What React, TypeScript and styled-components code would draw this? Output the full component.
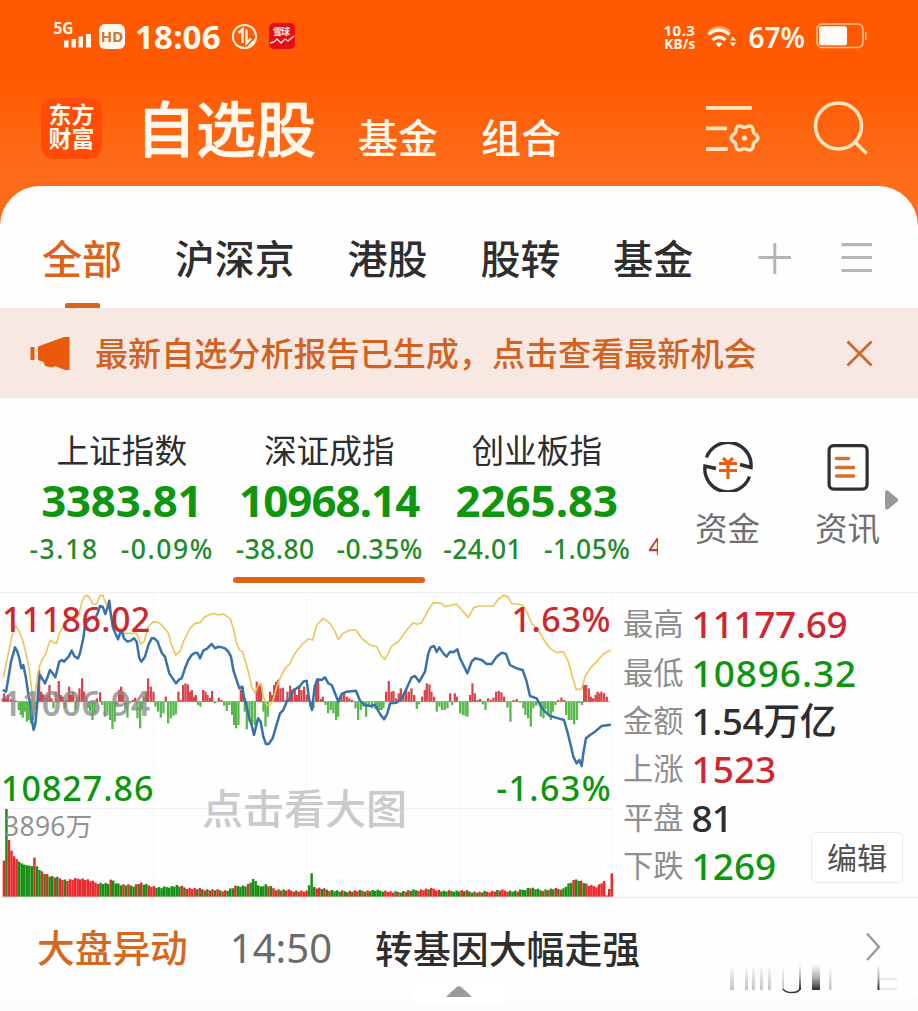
import React from "react";
import styled, { createGlobalStyle } from "styled-components";

const Global = createGlobalStyle`
  * { box-sizing: border-box; }
  body {
    margin: 0;
    background: #fff;
    font-family: "Noto Sans", "Noto Sans CJK SC", sans-serif;
    overflow: hidden;
  }
`;

const UP = "#d0262e";
const DOWN = "#0f960f";
const ORANGE = "#df6219";

const Screen = styled.main`
  width: 918px;
  height: 1011px;
  overflow: hidden;
  display: flex;
  flex-direction: column;
  background: linear-gradient(#ff5800 0, #ff5a02 80px, #fd6b18 165px, #fc6e20 240px);
`;

const Label = styled.span<{ $size: number; $weight?: number; $color?: string; $track?: number; $line?: number }>`
  display: block;
  white-space: nowrap;
  font-size: ${(p) => p.$size}px;
  font-weight: ${(p) => p.$weight ?? 500};
  color: ${(p) => p.$color ?? "#2e2e2e"};
  letter-spacing: ${(p) => p.$track ?? 0}px;
  line-height: ${(p) => (p.$line ? `${p.$line}px` : 1)};
`;

/* status bar */
const StatusBar = styled.div`
  height: 74px;
  flex: none;
  display: flex;
  align-items: center;
  padding: 0 51px 0 53px;
`;
const Signal = styled.svg`
  overflow: visible;
`;
const Clock = styled(Label)`
  margin: -2px 10px 0 10px;
`;
const BatteryLevel = styled(Label)`
  margin: -1px 11px 0 11px;
`;
const Spacer = styled.div`
  flex: 1;
`;
const NetSpeed = styled.div`
  display: flex;
  flex-direction: column;
  align-items: flex-end;
  width: 36px;
  margin-right: 12px;
`;
const HdBadge = styled.div`
  width: 26px;
  height: 25px;
  border-radius: 6px;
  background: #fff8ec;
  display: flex;
  align-items: center;
  justify-content: center;
  margin: -1px 0 0 4px;
`;

/* title bar */
const TitleBar = styled.header`
  height: 112px;
  flex: none;
  display: flex;
  align-items: flex-start;
  padding: 24px 49px 0 41px;
`;
const Logo = styled.div`
  width: 61px;
  height: 61px;
  border-radius: 13px;
  background: #fe4b08;
  display: flex;
  flex-direction: column;
  align-items: center;
  justify-content: center;
  padding-bottom: 5px;
`;
const Title = styled(Label)`
  margin: -2px 0 0 34px;
  -webkit-text-stroke: 0.7px #fff8ec;
`;
const SubTitle = styled(Label)<{ $left: number }>`
  margin: 15px 0 0 ${(p) => p.$left}px;
`;
const SearchIcon = styled.svg`
  margin-left: 53px;
`;

/* sheet */
const Sheet = styled.section`
  flex: 1;
  background: #fefefe;
  border-radius: 40px 40px 0 0;
  overflow: hidden;
  display: flex;
  flex-direction: column;
`;
const Tabs = styled.nav`
  height: 122px;
  flex: none;
  display: flex;
  padding: 0 46px 0 42px;
`;
const Tab = styled.div`
  height: 122px;
  margin-right: 52.8px;
  padding-top: 44px;
  display: flex;
  flex-direction: column;
  align-items: center;
  justify-content: space-between;
`;
const TabMark = styled.i`
  width: 35px;
  height: 5px;
  border-radius: 2px 2px 0 0;
  background: ${ORANGE};
`;
const TabTools = styled.div`
  flex: 1;
  height: 30px;
  margin-top: 57px;
  display: flex;
  justify-content: flex-end;
  gap: 50px;
`;

const Banner = styled.div`
  height: 90px;
  flex: none;
  background: #f7e8e1;
  display: flex;
  align-items: center;
  padding: 0 45px 0 30px;
`;
const BannerText = styled(Label)`
  margin: 2px 0 0 24px;
  flex: 1;
`;

/* indices */
const Overview = styled.div`
  height: 195px;
  flex: none;
  display: flex;
  border-bottom: 1px solid #eeeeee;
`;
const IndexList = styled.div`
  width: 658px;
  padding-left: 18px;
  overflow: hidden;
  display: flex;
`;
const IndexCard = styled.div`
  width: 207.5px;
  flex: none;
  padding-top: 30px;
  display: flex;
  flex-direction: column;
  align-items: center;
`;
const Changes = styled.div<{ $gap: number }>`
  height: 44px;
  margin-top: 1px;
  display: flex;
  align-items: center;
  justify-content: center;
  gap: ${(p) => p.$gap}px;
`;
const IndexMark = styled.i`
  width: 192px;
  height: 5.5px;
  margin-top: 6px;
  border-radius: 3px;
  background: ${ORANGE};
`;
const NextCard = styled.div`
  flex: none;
  padding: 126px 0 0 8px;
`;
const Shortcuts = styled.div`
  flex: 1;
  display: flex;
  padding: 44px 0 0 37px;
`;
const Shortcut = styled.div`
  width: 65px;
  margin-right: 55px;
  flex: none;
  display: flex;
  flex-direction: column;
  align-items: center;
  gap: 14px;
`;
const NextArrow = styled.svg`
  margin: 48px 0 0 -50px;
  flex: none;
`;

/* market panel */
const Market = styled.div`
  height: 305px;
  flex: none;
  display: flex;
  border-bottom: 1px solid #ececec;
`;
const ChartBox = styled.div`
  position: relative;
  width: 613px;
  height: 305px;
`;
const ChartLabel = styled(Label)<{ $top: number; $left?: number; $right?: number }>`
  position: absolute;
  top: ${(p) => p.$top}px;
  ${(p) => (p.$left !== undefined ? `left: ${p.$left}px;` : `right: ${p.$right}px;`)}
`;
const Stats = styled.div`
  width: 305px;
  padding: 7px 0 0 10px;
  position: relative;
`;
const StatRow = styled.div`
  height: 48.4px;
  display: flex;
  align-items: center;
  gap: 8px;
`;
const EditButton = styled.div`
  position: absolute;
  right: 15px;
  bottom: 14px;
  width: 92px;
  height: 51px;
  border: 1px solid #ececec;
  border-radius: 5px;
  background: #fff;
  display: flex;
  align-items: center;
  justify-content: center;
`;

/* news and footer */
const News = styled.div`
  height: 80px;
  flex: none;
  display: flex;
  align-items: flex-start;
  padding: 30px 37px 0 37px;
`;
const NewsTime = styled(Label)`
  margin: 0 43px 0 42px;
`;
const NewsArrow = styled.svg`
  margin-top: 4px;
`;
const Footer = styled.div`
  flex: 1;
  display: flex;
  justify-content: space-between;
  padding-left: 412px;
  padding-right: 20px;
  background: linear-gradient(#fefefe 0, #fefefe 14px, #f9fbfd 22px, #fbfcfd);
`;
const Handle = styled.div`
  width: 93px;
  height: 25px;
  background: #fff;
  border-radius: 3px;
  display: flex;
  justify-content: center;
  padding-top: 8px;
`;
const Remnant = styled.svg`
  margin-top: -16px;
`;

/* Chart series use a grid of 3 units per pixel. */
const blue =
  "8,300 18,305 25,265 33,215 45,172 52,185 58,205 64,235 70,225 78,265 86,320 92,345 97,400 101,420 106,400 112,340 116,280 120,255 128,268 135,280 143,260 150,240 158,250 166,262 178,215 186,210 192,215 198,208 206,200 215,182 224,200 234,205 240,190 250,145 255,105 262,95 272,85 280,80 285,85 292,72 300,48 308,50 316,72 324,48 328,32 332,70 338,110 346,130 354,148 360,130 366,125 372,145 382,155 392,152 402,145 410,155 418,205 424,215 435,200 445,165 455,145 463,145 473,155 480,175 486,190 495,200 500,220 508,250 518,265 528,280 538,268 545,265 555,235 565,210 575,195 585,188 593,190 600,205 610,182 622,175 635,162 645,175 655,170 665,172 675,175 685,185 693,200 700,240 708,265 718,295 726,290 732,320 740,350 748,385 755,405 762,435 768,410 774,385 782,395 790,440 798,462 806,462 818,445 828,410 840,370 850,360 860,335 870,325 880,300 890,295 900,288 910,275 920,272 927,325 936,360 944,290 952,268 965,270 975,262 985,280 995,285 1005,310 1015,335 1025,312 1040,305 1068,302 1080,332 1095,345 1110,348 1125,345 1140,372 1152,388 1162,370 1170,340 1190,338 1205,325 1220,295 1235,262 1245,258 1258,275 1275,245 1285,190 1292,172 1302,168 1310,186 1318,172 1330,190 1340,200 1350,185 1360,187 1372,178 1380,205 1390,225 1402,250 1415,215 1425,205 1445,210 1460,222 1475,222 1490,200 1505,188 1518,192 1530,225 1550,235 1568,240 1580,275 1590,318 1610,325 1620,345 1635,365 1650,378 1675,385 1692,390 1702,425 1712,465 1720,500 1730,520 1738,510 1745,528 1750,490 1758,445 1770,435 1785,425 1805,408 1833,404";
const yellow =
  "10,262 25,190 40,120 48,108 58,125 68,150 80,200 88,240 95,300 100,360 105,320 112,260 118,230 128,205 136,195 145,165 152,150 160,158 170,160 178,130 190,110 205,85 212,78 222,90 235,80 245,40 252,20 262,16 270,25 278,42 290,42 300,16 308,16 318,40 328,60 345,100 365,130 385,130 410,130 422,162 432,155 445,110 460,95 475,97 490,110 505,130 515,165 527,195 540,185 550,155 570,115 585,100 600,98 615,80 640,70 655,75 670,72 690,85 700,115 710,160 718,180 728,185 735,210 745,245 755,290 765,310 775,285 783,280 790,320 800,345 810,345 820,330 830,290 840,265 855,235 870,220 885,190 905,165 925,147 938,150 950,105 970,85 990,100 1005,125 1015,148 1030,130 1050,120 1068,120 1085,145 1110,165 1130,170 1142,195 1154,208 1165,190 1175,168 1195,155 1220,120 1240,98 1250,103 1265,98 1285,60 1300,38 1325,40 1335,50 1370,42 1385,60 1405,82 1422,52 1440,48 1480,48 1495,28 1512,15 1525,22 1535,40 1568,45 1580,65 1595,100 1615,120 1635,155 1650,175 1670,188 1690,185 1705,215 1720,270 1728,298 1745,298 1755,260 1770,235 1790,215 1810,192 1833,180";

/* x, height pairs; positive rises above the middle line */
const breadth = [
  8, 10, 12, 25, 18, 12, 24, 20, 32, 8, 40, 5, 48, 3, 56, -25, 62, -40, 68, -48, 74, -30, 80, -60, 86, -55, 92, -65, 98, -55, 104, -25, 110, -10,
  117, 95, 123, 30, 129, 22, 135, 15, 141, 20, 148, 50, 154, 10, 160, -20, 167, 30, 176, 62, 182, 20, 188, 15, 194, -20, 200, 5, 207, 45, 213, 20,
  219, 30, 226, -25, 232, 15, 238, 40, 246, 70, 252, 30, 258, 15, 264, -20, 270, -30, 277, -55, 283, -35, 290, 10, 300, 28, 306, -10, 314, -45,
  322, -30, 330, -55, 337, -82, 344, -60, 350, -10, 357, 35, 363, 45, 369, 30, 375, -20, 382, -48, 390, -5, 398, 5, 405, 12, 412, -50, 420, -80,
  426, -20, 432, 15, 438, 30, 444, 70, 452, 45, 460, 30, 466, -15, 474, -30, 482, -48, 490, -35, 497, 15, 504, -65, 512, -50, 520, -42, 527, -38,
  535, 30, 541, 5, 549, 50, 556, 55, 563, 52, 569, 30, 575, 35, 581, 15, 587, 20, 594, -10, 601, -15, 609, 35, 616, 30, 622, 20, 629, 12, 636, 32,
  644, -5, 656, 12, 664, 5, 672, -12, 680, -28, 688, -10, 696, -40, 702, -70, 708, -80, 715, -70, 722, 35, 728, 45, 734, -30, 740, -83, 748, -60,
  756, -65, 764, -70, 770, 60, 777, 50, 783, 48, 790, -30, 796, -75, 803, -45, 810, 30, 816, 20, 822, 50, 828, 60, 834, 66, 841, 40, 848, 42,
  856, 5, 862, 30, 870, 48, 876, 35, 884, 40, 890, 20, 897, 45, 904, 35, 912, 45, 920, 20, 930, -15, 940, -20, 948, 60, 954, 65, 962, 8, 968, 15,
  976, -10, 984, -35, 992, -25, 1000, -35, 1008, -55, 1014, -45, 1024, 20, 1032, 25, 1040, 15, 1048, 10, 1056, 5, 1066, -20, 1074, -55, 1082, -25,
  1090, -15, 1098, -45, 1106, -10, 1116, -20, 1126, -22, 1132, -24, 1138, -25, 1144, -25, 1150, -20, 1158, 30, 1166, 62, 1174, 30, 1180, 32,
  1188, 10, 1196, 25, 1202, 40, 1210, 20, 1218, 35, 1226, 30, 1234, 40, 1242, 20, 1250, -22, 1256, -8, 1266, 15, 1274, 35, 1280, 55, 1288, 52,
  1294, 30, 1302, 15, 1310, -30, 1318, -15, 1326, -25, 1334, -25, 1342, -20, 1350, 25, 1356, -10, 1364, 25, 1370, 15, 1380, -35, 1388, -40,
  1396, -42, 1402, -45, 1410, 20, 1417, 55, 1424, 25, 1432, 5, 1440, 8, 1448, -8, 1456, -25, 1464, 10, 1472, 5, 1480, 12, 1488, 30, 1496, 32,
  1504, 28, 1512, 15, 1522, -18, 1531, -60, 1540, 5, 1550, 8, 1560, -3, 1570, -20, 1576, -40, 1584, -50, 1592, -75, 1600, -20, 1608, -12,
  1616, -5, 1622, -45, 1630, -50, 1636, -22, 1644, -40, 1652, -55, 1658, -30, 1666, -10, 1674, 5, 1684, 12, 1692, 5, 1698, -40, 1706, -55,
  1714, -55, 1722, -68, 1730, -55, 1738, -5, 1746, -10, 1752, 50, 1758, 50, 1766, 40, 1772, 15, 1778, 10, 1786, 20, 1792, 30, 1798, 25, 1804, 30,
  1812, 25, 1820, 15,
];

const volumeTops: [number, number][] = [
  [8, 812], [14, 812], [15, 657], [21, 657], [23, 740], [28, 755], [33, 780], [42, 800], [50, 808], [60, 818], [75, 825], [95, 828], [99, 803],
  [104, 803], [108, 825], [115, 838], [130, 848], [150, 860], [175, 865], [200, 872], [240, 866], [260, 870], [290, 880], [325, 882],
  [335, 868], [342, 876], [360, 885], [400, 888], [420, 879], [430, 884], [450, 888], [480, 895], [530, 888], [560, 895], [620, 900], [680, 903],
  [710, 889], [740, 888], [762, 868], [780, 892], [795, 885], [830, 900], [926, 906], [928, 842], [934, 842], [936, 892], [980, 900],
  [1020, 905], [1100, 903], [1150, 903], [1180, 908], [1230, 903], [1300, 897], [1330, 905], [1380, 903], [1440, 908], [1500, 902], [1550, 905],
  [1590, 894], [1620, 902], [1660, 898], [1690, 897], [1700, 886], [1730, 868], [1750, 878], [1765, 888], [1790, 890], [1812, 873], [1816, 915],
  [1826, 918], [1829, 850], [1836, 850],
];

/* right edge of a run and the share of red bars in it */
const volumeRuns: [number, number][] = [
  [14, 1], [22, 0], [55, 0.95], [111, 0.04], [130, 0.8], [180, 0.3], [230, 0.7], [300, 0.95], [440, 0.35], [465, 0.9], [545, 0.1], [600, 0.8],
  [690, 0.55], [800, 0.1], [927, 0.75], [938, 0], [980, 0.6], [1040, 0.2], [1090, 0.6], [1155, 0.2], [1180, 0.9], [1240, 0.4], [1330, 0.8],
  [1450, 0.25], [1530, 0.75], [1690, 0.3], [1740, 0.1], [1752, 0.6], [1840, 1],
];

function topAt(x: number) {
  for (let i = 1; i < volumeTops.length; i++) {
    const [x1, y1] = volumeTops[i];
    const [x0, y0] = volumeTops[i - 1];
    if (x <= x1) return y0 + ((y1 - y0) * (x - x0)) / (x1 - x0);
  }
  return 850;
}

const volumes = Array.from({ length: 240 }, (_, i) => {
  const x = 8 + i * 7.63;
  const noise = ((i * 7919 + 13) % 101) / 101;
  const run = volumeRuns.find(([end]) => x + 3 <= end) ?? [0, 1];
  const top = topAt(x + 3) + (i > 14 && i < 236 ? ((i * 31) % 7) - 4 : 0);
  return { x, top, red: noise < run[1] };
});

function MarketChart() {
  const bars: React.ReactNode[] = [];
  for (let i = 0; i < breadth.length; i += 2) {
    const h = breadth[i + 1];
    bars.push(
      <rect key={i} x={breadth[i] - 3} y={h > 0 ? 335 - h : 335} width={6.8} height={Math.abs(h)} fill={h > 0 ? "#d9444b" : "#55b948"} />
    );
  }
  return (
    <svg width="613" height="305" viewBox="0 9 1839 915">
      <g stroke="#f6f6f6" strokeWidth="3">
        <path d="M462 10V920M920 10V920M1378 10V920M1836 10V920" fill="none" />
        <path d="M0 655H1836" stroke="#efefef" fill="none" />
      </g>
      <path d="M8 335H1830" stroke="#b9a58d" strokeWidth="3" />
      {bars}
      {volumes.map((v) => (
        <rect key={v.x} x={v.x} y={v.top} width={7.4} height={920 - v.top} fill={v.red ? "#e8292d" : "#159015"} />
      ))}
      <polyline points={yellow} fill="none" stroke="#ecc75c" strokeWidth="5" strokeLinejoin="round" />
      <polyline points={blue} fill="none" stroke="#3872ab" strokeWidth="7.5" strokeLinejoin="round" />
    </svg>
  );
}

const gearPath = (() => {
  const pts: string[] = [];
  for (let i = 0; i <= 72; i++) {
    const a = (i / 72) * Math.PI * 2;
    const r = 12 + 1.4 * Math.cos(a * 6);
    pts.push(`${(39 + r * Math.cos(a)).toFixed(2)} ${(34 + r * Math.sin(a)).toFixed(2)}`);
  }
  return `M${pts.join("L")}Z`;
})();

const indices = [
  { name: "上证指数", value: "3383.81", track: -0.2, diff: "-3.18", pct: "-0.09%", gap: 22, fine: 1.6, active: false },
  { name: "深证成指", value: "10968.14", track: -0.9, diff: "-38.80", pct: "-0.35%", gap: 22, fine: 0.4, active: true },
  { name: "创业板指", value: "2265.83", track: 0, diff: "-24.01", pct: "-1.05%", gap: 22, fine: 0.4, active: false },
];

const stats: [string, string, string, number][] = [
  ["最高", "11177.69", UP, -0.3],
  ["最低", "10896.32", DOWN, 0.9],
  ["金额", "1.54万亿", "#2e2e2e", -0.5],
  ["上涨", "1523", UP, 0],
  ["平盘", "81", "#2e2e2e", -1],
  ["下跌", "1269", DOWN, 0],
];

const CREAM = "#fff8ec";

export default function App() {
  return (
    <Screen>
      <Global />
      <StatusBar>
        <Signal width="42" height="30" viewBox="0 0 42 30">
          <text x="0.500" y="12" fontSize="15.5" fontWeight="700" fill={CREAM}>5G</text>
          <path d="M11 25.500v-7h4.500v7zM18.500 25.500v-8.500h4.500v8.500zM25.500 25.500v-11h4.500v11zM33 25.500v-13.500h5v13.500z" fill={CREAM} />
        </Signal>
        <HdBadge>
          <Label $size={15} $weight={700} $color="#c8763a">HD</Label>
        </HdBadge>
        <Clock $size={33} $weight={700} $color={CREAM} $track={0.2}>18:06</Clock>
        <svg width="27" height="29" viewBox="0 0 27 29" fill="none" stroke={CREAM}>
          <circle cx="13.500" cy="13.500" r="11.600" strokeWidth="2" />
          <path d="M7.500 10l4-3.500V20M15.500 6.500V20l4.500-4.500" strokeWidth="2.400" />
          <path d="M17 23q6-1.500 7-7z" fill={CREAM} strokeWidth="1" />
        </svg>
        <svg width="46" height="28" viewBox="0 0 46 28">
          <rect x="11" width="26" height="26" rx="5" fill="#e40f17" />
          <text x="15" y="12" fontSize="9" fontWeight="700" fill="#ffe9df" textLength="17">雪球</text>
          <path d="M12 20l4-1 3-3 4 4 4-4 3 2 6-5" fill="none" stroke="#ffe9df" strokeWidth="1.300" />
        </svg>
        <Spacer />
        <NetSpeed>
          <Label $size={15} $weight={700} $color={CREAM} $track={0.5} $line={14}>10.3</Label>
          <Label $size={13.5} $weight={700} $color={CREAM} $track={0.2} $line={14}>KB/s</Label>
        </NetSpeed>
        <svg width="30" height="24" viewBox="0 0 30 24" fill="none">
          <path d="M2 6Q12-2 23 6" stroke="#ff9a52" strokeWidth="2" />
          <path d="M1.500 9.500Q12 0.500 22.500 9.500" stroke={CREAM} strokeWidth="3.600" />
          <path d="M5.500 15Q12 9.500 18.500 15" stroke={CREAM} strokeWidth="3.600" />
          <path d="M8.500 18.500q3.500-2.600 7 0L12 22.500zM23 15.500l3-4 3 4zM23 17.500h6l-3 4z" fill={CREAM} />
        </svg>
        <BatteryLevel $size={28} $weight={600} $color={CREAM}>67%</BatteryLevel>
        <svg width="51" height="28" viewBox="0 0 51 28">
          <rect x="1" y="1" width="46" height="23.500" rx="5" fill="none" stroke="#ffc18d" strokeWidth="1.600" />
          <rect x="3" y="3.200" width="28" height="19" rx="2.500" fill="#fffdf8" />
          <path d="M49.800 9v8" stroke="#ffc18d" strokeWidth="1.600" />
        </svg>
      </StatusBar>

      <TitleBar>
        <Logo>
          <Label $size={23} $weight={700} $color={CREAM} $line={24}>东方</Label>
          <Label $size={23} $weight={700} $color={CREAM} $line={24}>财富</Label>
        </Logo>
        <Title as="h1" $size={60} $weight={500} $color={CREAM} $line={66}>自选股</Title>
        <SubTitle $left={42} $size={40} $color={CREAM} $line={50}>基金</SubTitle>
        <SubTitle $left={43} $size={40} $color={CREAM} $line={50}>组合</SubTitle>
        <Spacer />
        <svg width="56" height="56" viewBox="0 0 56 56" fill="none" stroke="#ffe5bd" strokeWidth="3.800">
          <path d="M2 9.800H48M2 30.300H23M2 51H24" />
          <path d={gearPath} transform="translate(1.500 6)" strokeWidth="3.400" />
          <circle cx="40.500" cy="40" r="2.600" fill="#ffe5bd" stroke="none" />
        </svg>
        <SearchIcon width="56" height="58" viewBox="0 0 56 58" fill="none" stroke="#ffe5bd" strokeWidth="3.600">
          <circle cx="25.500" cy="28" r="23" />
          <path d="M41 43L53.500 55.500" />
        </SearchIcon>
      </TitleBar>

      <Sheet>
        <Tabs>
          <Tab>
            <Label $size={40} $color={ORANGE} $line={58}>全部</Label>
            <TabMark />
          </Tab>
          {["沪深京", "港股", "股转", "基金"].map((t) => (
            <Tab key={t}>
              <Label $size={40} $line={58}>{t}</Label>
            </Tab>
          ))}
          <TabTools>
            <svg width="33" height="33" viewBox="0 0 33 33" stroke="#b5b5b5" strokeWidth="3">
              <path d="M.5 14.500H33M16.800-1.500V31" />
            </svg>
            <svg width="31" height="30" viewBox="0 0 31 30" stroke="#b5b5b5" strokeWidth="3.200">
              <path d="M.5 1.600H31M.5 14.500H31M.5 27.500H31" />
            </svg>
          </TabTools>
        </Tabs>

        <Banner>
          <svg width="41" height="34" viewBox="0 0 41 34" fill="#e95a0c">
            <path d="M.5 11h4v13h-4zM8 10.500L34 1h5.500v33H35l-10-4-3 1.500-7-1.500-1.500-4L8 24z" />
          </svg>
          <BannerText $size={33.1} $color="#d26222" $line={48}>最新自选分析报告已生成，点击查看最新机会</BannerText>
          <svg width="27" height="27" viewBox="0 0 27 27" stroke="#cf6425" strokeWidth="2.600">
            <path d="M1.500 1.500l24 24M25.500 1.500l-24 24" />
          </svg>
        </Banner>

        <Overview>
          <IndexList>
            {indices.map((x) => (
              <IndexCard key={x.name}>
                <Label $size={32.7} $weight={400} $line={46}>{x.name}</Label>
                <Label $size={43.8} $weight={700} $color={DOWN} $track={x.track} $line={52}>{x.value}</Label>
                <Changes $gap={x.gap}>
                  <Label $size={26.5} $weight={500} $color="#218a2b" $track={x.fine}>{x.diff}</Label>
                  <Label $size={26.5} $weight={500} $color="#218a2b" $track={x.fine}>{x.pct}</Label>
                </Changes>
                {x.active && <IndexMark />}
              </IndexCard>
            ))}
            <NextCard>
              <Label $size={24} $weight={500} $color="#c23a3a" $line={44}>4</Label>
            </NextCard>
          </IndexList>
          <Shortcuts>
            <Shortcut>
              <svg width="52" height="50" viewBox="0 0 52 50" fill="none" stroke="#303030" strokeWidth="3.400">
                <path d="M4.500 15.500A23 23 0 0 1 49 25.500l-11-3M47.500 34.500A23 23 0 0 1 3 24l11 2.500" />
                <path d="M21 16l5 5 5-5M17 21.500h18M17 28.500h18M26 21v16" stroke="#e8600f" strokeWidth="3.200" />
              </svg>
              <Label $size={32.5} $weight={400} $color="#6f6f6f" $line={46}>资金</Label>
            </Shortcut>
            <Shortcut>
              <svg width="42" height="50" viewBox="0 0 42 50" fill="none" stroke="#303030" strokeWidth="3.200">
                <rect x="2.100" y="3.600" width="38" height="43.500" rx="4.500" />
                <path d="M9.500 16.500h12M9.500 25.500h17M9.500 34h17" stroke="#d96f2c" strokeWidth="3.600" strokeLinecap="round" />
              </svg>
              <Label $size={32.5} $weight={400} $color="#6f6f6f" $line={46}>资讯</Label>
            </Shortcut>
            <NextArrow width="14" height="20" viewBox="0 0 14 20" fill="#999">
              <path d="M0 1.500Q2-.8 4 1.500L13 9v2L4 18.500Q2 20.800 0 18.500z" />
            </NextArrow>
          </Shortcuts>
        </Overview>

        <Market>
          <ChartBox>
            <MarketChart />
            <ChartLabel $top={5} $left={2} $size={34} $weight={500} $color={UP} $track={0.4} $line={42}>11186.02</ChartLabel>
            <ChartLabel $top={5} $right={2} $size={34} $weight={500} $color={UP} $track={0.6} $line={42}>1.63%</ChartLabel>
            <ChartLabel $top={89} $left={2} $size={34} $weight={600} $color="#8c8c8ccc" $track={0.4} $line={42}>11006.94</ChartLabel>
            <ChartLabel $top={174} $left={1} $size={34} $weight={500} $color={DOWN} $track={1} $line={42}>10827.86</ChartLabel>
            <ChartLabel $top={174} $right={1} $size={34} $weight={500} $color={DOWN} $track={1.4} $line={42}>-1.63%</ChartLabel>
            <ChartLabel $top={213} $left={4} $size={26.5} $weight={400} $color="#929292" $track={0.3} $line={40}>3896万</ChartLabel>
            <ChartLabel $top={186} $left={202} $size={41} $weight={500} $color="#cacaca" $line={58}>点击看大图</ChartLabel>
          </ChartBox>
          <Stats>
            {stats.map(([name, value, color, track]) => (
              <StatRow key={name}>
                <Label $size={30.3} $weight={400} $color="#8e8e8e" $line={48}>{name}</Label>
                <Label $size={37} $weight={500} $color={color} $track={track} $line={48}>{value}</Label>
              </StatRow>
            ))}
            <EditButton>
              <Label $size={30} $weight={400} $color="#505050" $line={44}>编辑</Label>
            </EditButton>
          </Stats>
        </Market>

        <News>
          <Label $size={37.7} $color="#d5681f" $line={40}>大盘异动</Label>
          <NewsTime $size={40} $weight={400} $color="#6b6b6b" $line={40}>14:50</NewsTime>
          <Label $size={37.9} $line={40}>转基因大幅走强</Label>
          <Spacer />
          <NewsArrow width="16" height="30" viewBox="0 0 16 30" fill="none" stroke="#9a9a9a" strokeWidth="2.400">
            <path d="M2 1.500L14 15 2 28" />
          </NewsArrow>
        </News>
        <Footer>
          <Handle>
            <svg width="26" height="12" viewBox="0 0 26 12" fill="#9b9b9b">
              <path d="M0 11Q6 5 10.500 1.200q2.500-1.800 5 0Q20 5 26 11z" />
            </svg>
          </Handle>
          <Remnant width="172" height="32" viewBox="0 0 172 32">
            <defs>
              <linearGradient id="soft" x1="0" y1="0" x2="0" y2="1">
                <stop offset="0" stopColor="#fefefe" />
                <stop offset="1" stopColor="#c2c2c2" />
              </linearGradient>
              <linearGradient id="dark" x1="0" y1="0" x2="0" y2="1">
                <stop offset="0" stopColor="#fafafa" />
                <stop offset="0.5" stopColor="#b0b0b0" />
                <stop offset="1" stopColor="#2a2a2a" />
              </linearGradient>
            </defs>
            <path d="M4 3h4v25H4zM19 3h3v25h-3zM26 3h3v25h-3zM34 3h3v25h-3zM42 3h3v25h-3zM56 3h2v25h-2zM103 3h2.500v25H103z" fill="url(#soft)" />
            <path d="M73 3h2v25h-2zM86 3h8v25h-8zM151.500 3h2v25h-2z" fill="url(#dark)" />
            <path d="M57 27q2 3.500 9 3.500 7 0 8-4" fill="none" stroke="#333" strokeWidth="1.500" />
            <path d="M154 17h17M154 27h17" stroke="#ccc" strokeWidth="1.200" />
          </Remnant>
        </Footer>
      </Sheet>
    </Screen>
  );
}
